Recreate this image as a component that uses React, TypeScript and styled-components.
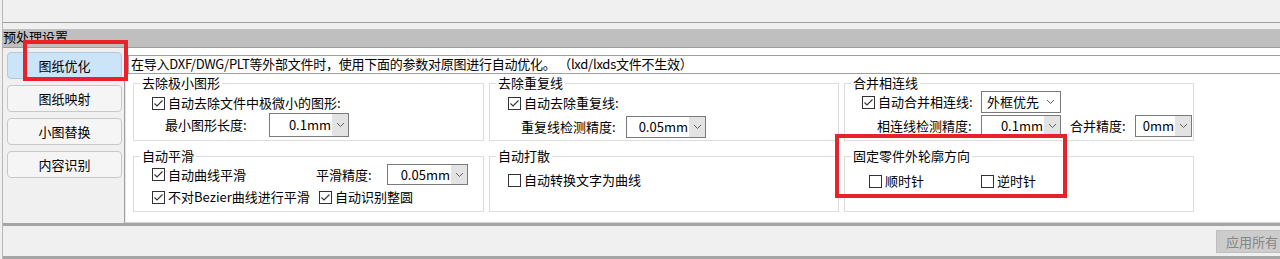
import React from 'react';
import styled, { createGlobalStyle } from 'styled-components';

const Global = createGlobalStyle`
  *, *::before, *::after { box-sizing: border-box; }
  html, body { margin: 0; padding: 0; background: #f0f0f0; }
  body {
    font-family: "Noto Sans CJK SC", "Noto Sans", sans-serif;
    font-size: 13px;
    color: #000;
  }
`;

const Root = styled.div`
  position: relative;
  width: 1280px;
  height: 259px;
  overflow: hidden;
  background: #f0f0f0;
`;

const Frame = styled.div`
  margin-left: 2px;
  height: 259px;
  border-left: 1px solid #b8b8b8;
  display: flex;
  flex-direction: column;
`;

const TopStrip = styled.div`
  height: 23px;
  flex-shrink: 0;
  border-bottom: 1px solid #a0a0a0;
  background: #f0f0f0;
`;

const Spacer = styled.div`
  height: 6px;
  flex-shrink: 0;
`;

const Header = styled.div`
  height: 19px;
  flex-shrink: 0;
  background: #bfbfbf;
  border-bottom: 1px solid #9d9d9d;
  line-height: 15px;
  padding-left: 0;
  white-space: nowrap;
`;

const Body = styled.div`
  height: 175px;
  flex-shrink: 0;
  display: flex;
`;

const Nav = styled.div`
  width: 122px;
  flex-shrink: 0;
  background: #f0f0f0;
  border-right: 1px solid #a0a0a0;
  padding: 4px 0 0 4px;
  display: flex;
  flex-direction: column;
  gap: 6px;
`;

const NavButton = styled.div<{ $active?: boolean }>`
  width: 115px;
  height: 27px;
  border: 1px solid ${(p) => (p.$active ? '#b3c8da' : '#c8c8c8')};
  background: ${(p) => (p.$active ? '#cce4f7' : '#f5f5f5')};
  border-radius: 4px;
  display: flex;
  align-items: center;
  justify-content: center;
  line-height: 25px;
`;

const Content = styled.div`
  flex: 1;
  background: #fff;
  border-left: 1px solid #e6e6e6;
  border-bottom: 1px solid #d4d4d4;
  padding: 7px 0 0 2px;
  display: flex;
  flex-direction: column;
`;

const Desc = styled.div`
  height: 19px;
  border: 1px solid #a0a0a0;
  border-right: none;
  line-height: 16px;
  padding-left: 2px;
  letter-spacing: -0.25px;
  white-space: nowrap;
`;

const Grid = styled.div`
  margin: 1px 0 0 5px;
  display: grid;
  grid-template-columns: 351px 350px 350px;
  grid-template-rows: 66px 64px;
  column-gap: 5px;
  row-gap: 7px;
`;

const Group = styled.fieldset`
  margin: 0;
  padding: 0;
  min-width: 0;
  border: 1px solid #dcdcdc;
`;

const Legend = styled.legend`
  margin-left: 6px;
  padding: 0 2px;
  line-height: 16px;
  font-size: 13px;
`;

const Inner = styled.div<{ $pt: number; $pl: number }>`
  display: flex;
  flex-direction: column;
  padding-top: ${(p) => p.$pt}px;
  padding-left: ${(p) => p.$pl}px;
`;

const Row = styled.div<{ $h: number; $mt?: number; $indent?: number }>`
  display: flex;
  align-items: center;
  height: ${(p) => p.$h}px;
  margin-top: ${(p) => p.$mt ?? 0}px;
  padding-left: ${(p) => p.$indent ?? 0}px;
  white-space: nowrap;
`;

const CheckItem = styled.label<{ $w?: number }>`
  display: inline-flex;
  align-items: center;
  gap: 3px;
  flex-shrink: 0;
  width: ${(p) => (p.$w ? `${p.$w}px` : 'auto')};
  line-height: 18px;
  white-space: nowrap;
`;

const Box = styled.span`
  width: 13px;
  height: 13px;
  border: 1px solid #333;
  background: #fff;
  display: inline-flex;
  align-items: center;
  justify-content: center;
  flex-shrink: 0;
`;

const Label = styled.span<{ $w: number; $ml?: number }>`
  width: ${(p) => p.$w}px;
  margin-left: ${(p) => p.$ml ?? 0}px;
  flex-shrink: 0;
  line-height: 18px;
  white-space: nowrap;
`;

const ComboBox = styled.div<{ $w: number; $h: number }>`
  width: ${(p) => p.$w}px;
  height: ${(p) => p.$h}px;
  border: 1px solid #7a7a7a;
  background: #fff;
  display: flex;
  flex-shrink: 0;
`;

const ComboValue = styled.div<{ $left?: boolean }>`
  flex: 1;
  padding-left: ${(p) => (p.$left ? '5px' : '0')};
  padding-right: ${(p) => (p.$left ? '0' : '1px')};
  display: flex;
  align-items: center;
  justify-content: ${(p) => (p.$left ? 'flex-start' : 'flex-end')};
  line-height: 16px;
  white-space: nowrap;
  overflow: hidden;
`;

const DropButton = styled.div<{ $plain?: boolean }>`
  width: ${(p) => (p.$plain ? '20px' : '16px')};
  background: ${(p) => (p.$plain ? '#fff' : '#e3e3e3')};
  display: flex;
  align-items: center;
  justify-content: center;
  flex-shrink: 0;
`;

const Separator = styled.div`
  height: 3px;
  flex-shrink: 0;
  background: #a5a5a5;
`;

const Footer = styled.div`
  height: 30px;
  flex-shrink: 0;
  background: #f0f0f0;
  display: flex;
  justify-content: flex-end;
  align-items: flex-start;
  padding-top: 4px;
`;

const ApplyButton = styled.div`
  width: 72px;
  height: 23px;
  margin-right: -8px;
  background: #cccccc;
  border: 1px solid #bfbfbf;
  color: #858585;
  line-height: 21px;
  padding-left: 9px;
  white-space: nowrap;
  flex-shrink: 0;
`;

const BottomLine = styled.div`
  height: 3px;
  flex-shrink: 0;
  background: #a5a5a5;
`;

const Highlight = styled.div<{ $x: number; $y: number; $w: number; $h: number }>`
  position: absolute;
  left: ${(p) => p.$x}px;
  top: ${(p) => p.$y}px;
  width: ${(p) => p.$w}px;
  height: ${(p) => p.$h}px;
  border: 4px solid #e8222b;
  pointer-events: none;
`;

const Chevron = () => (
  <svg width="9" height="6" viewBox="0 0 9 6">
    <polyline points="1,1 4.5,4.5 8,1" fill="none" stroke="#606060" strokeWidth="1" />
  </svg>
);

const Check = ({ checked }: { checked?: boolean }) => (
  <Box>
    {checked && (
      <svg width="11" height="11" viewBox="0 0 11 11">
        <polyline points="1.5,5.5 4,8 9.5,2.5" fill="none" stroke="#333" strokeWidth="1.1" />
      </svg>
    )}
  </Box>
);

const Combo = ({ value, w, h, list }: { value: string; w: number; h: number; list?: boolean }) => (
  <ComboBox $w={w} $h={h}>
    <ComboValue $left={list}>{value}</ComboValue>
    <DropButton $plain={list}>
      <Chevron />
    </DropButton>
  </ComboBox>
);

export default function App() {
  return (
    <Root>
      <Global />
      <Frame>
        <TopStrip />
        <Spacer />
        <Header>预处理设置</Header>
        <Body>
          <Nav>
            <NavButton $active>图纸优化</NavButton>
            <NavButton>图纸映射</NavButton>
            <NavButton>小图替换</NavButton>
            <NavButton>内容识别</NavButton>
          </Nav>
          <Content>
            <Desc>在导入DXF/DWG/PLT等外部文件时，使用下面的参数对原图进行自动优化。 （lxd/lxds文件不生效）</Desc>
            <Grid>
              <Group>
                <Legend>去除极小图形</Legend>
                <Inner $pt={2} $pl={18}>
                  <Row $h={20}>
                    <CheckItem>
                      <Check checked />
                      自动去除文件中极微小的图形:
                    </CheckItem>
                  </Row>
                  <Row $h={24} $indent={13}>
                    <Label $w={104}>最小图形长度:</Label>
                    <Combo value="0.1mm" w={80} h={24} />
                  </Row>
                </Inner>
              </Group>
              <Group>
                <Legend>去除重复线</Legend>
                <Inner $pt={2} $pl={18}>
                  <Row $h={20}>
                    <CheckItem>
                      <Check checked />
                      自动去除重复线:
                    </CheckItem>
                  </Row>
                  <Row $h={22} $mt={3} $indent={13}>
                    <Label $w={105}>重复线检测精度:</Label>
                    <Combo value="0.05mm" w={80} h={22} />
                  </Row>
                </Inner>
              </Group>
              <Group>
                <Legend>合并相连线</Legend>
                <Inner $pt={0} $pl={17}>
                  <Row $h={22}>
                    <CheckItem $w={119}>
                      <Check checked />
                      自动合并相连线:
                    </CheckItem>
                    <Combo value="外框优先" w={80} h={22} list />
                  </Row>
                  <Row $h={22} $mt={2} $indent={15}>
                    <Label $w={104}>相连线检测精度:</Label>
                    <Combo value="0.1mm" w={80} h={22} />
                    <Label $w={65} $ml={9}>合并精度:</Label>
                    <Combo value="0mm" w={57} h={22} />
                  </Row>
                </Inner>
              </Group>
              <Group>
                <Legend>自动平滑</Legend>
                <Inner $pt={0} $pl={18}>
                  <Row $h={21}>
                    <CheckItem $w={164}>
                      <Check checked />
                      自动曲线平滑
                    </CheckItem>
                    <Label $w={71}>平滑精度:</Label>
                    <Combo value="0.05mm" w={81} h={21} />
                  </Row>
                  <Row $h={20} $mt={2}>
                    <CheckItem $w={167}>
                      <Check checked />
                      不对Bezier曲线进行平滑
                    </CheckItem>
                    <CheckItem>
                      <Check checked />
                      自动识别整圆
                    </CheckItem>
                  </Row>
                </Inner>
              </Group>
              <Group>
                <Legend>自动打散</Legend>
                <Inner $pt={6} $pl={18}>
                  <Row $h={20}>
                    <CheckItem>
                      <Check />
                      自动转换文字为曲线
                    </CheckItem>
                  </Row>
                </Inner>
              </Group>
              <Group>
                <Legend>固定零件外轮廓方向</Legend>
                <Inner $pt={7} $pl={24}>
                  <Row $h={20}>
                    <CheckItem $w={112}>
                      <Check />
                      顺时针
                    </CheckItem>
                    <CheckItem>
                      <Check />
                      逆时针
                    </CheckItem>
                  </Row>
                </Inner>
              </Group>
            </Grid>
          </Content>
        </Body>
        <Separator />
        <Footer>
          <ApplyButton>应用所有</ApplyButton>
        </Footer>
        <BottomLine />
      </Frame>
      <Highlight $x={23} $y={40} $w={105} $h={41} />
      <Highlight $x={835} $y={134} $w={232} $h={64} />
    </Root>
  );
}
